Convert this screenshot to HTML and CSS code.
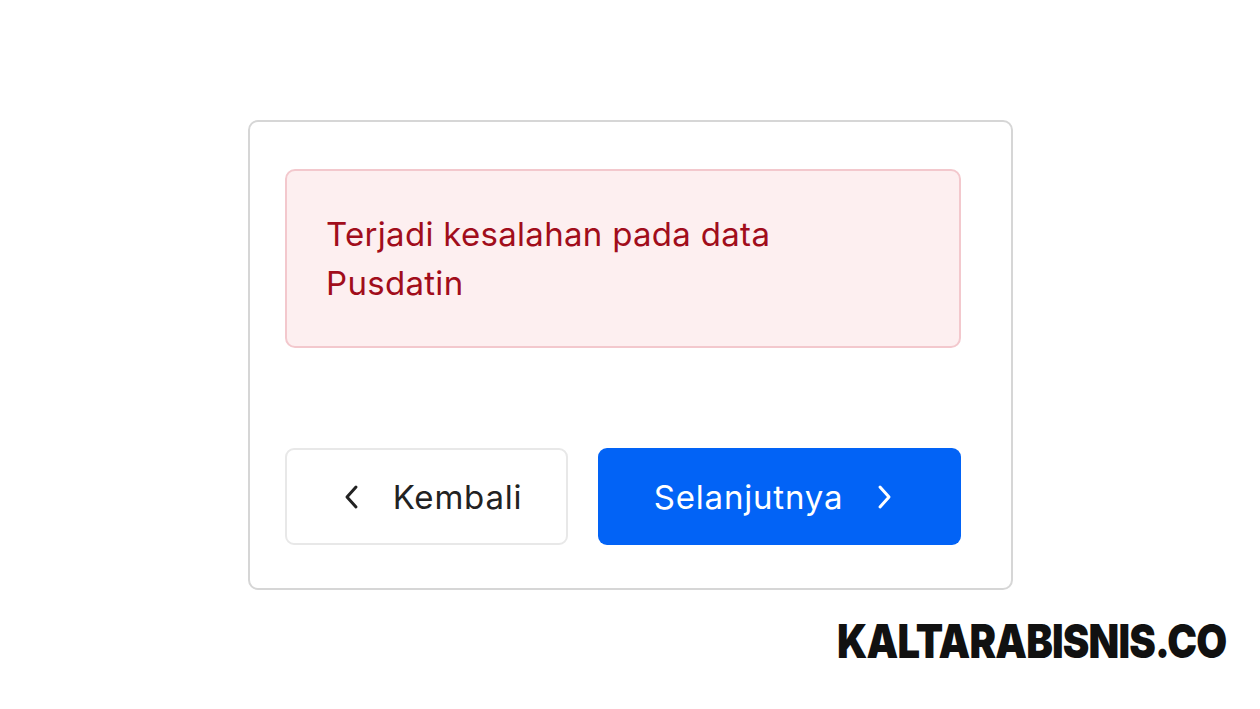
FILE: index.html
```html
<!DOCTYPE html>
<html lang="id">
<head>
  <meta charset="UTF-8" />
  <meta name="viewport" content="width=device-width, initial-scale=1" />
  <title>Verifikasi Data</title>
  <link rel="stylesheet" href="styles.css">
</head>
<body>
  <div class="page">
    <div class="card">
      <div class="alert">Terjadi kesalahan pada data<br>Pusdatin</div>
      <div class="actions">
        <button class="btn btn-back">
          <svg width="18" height="26" viewBox="0 0 18 26"><path d="M13 3 L4 13 L13 23" fill="none" stroke="#222" stroke-width="3" stroke-linecap="round" stroke-linejoin="round"/></svg>
          <span>Kembali</span>
        </button>
        <button class="btn btn-next">
          <span>Selanjutnya</span>
          <svg width="18" height="26" viewBox="0 0 18 26"><path d="M5 3 L14 13 L5 23" fill="none" stroke="#fff" stroke-width="3" stroke-linecap="round" stroke-linejoin="round"/></svg>
        </button>
      </div>
    </div>
    <div class="brand">KALTARABISNIS.CO</div>
  </div>
</body>
</html>
```

FILE: styles.css
```css
body {
  margin: 0;
  background: #fff;
  font-family: "Inter", "Liberation Sans", sans-serif;
}
.page {
  width: 1260px;
  height: 709px;
  position: relative;
  padding-top: 120px;
  padding-left: 248px;
  box-sizing: border-box;
  overflow: hidden;
}
.card {
  width: 765px;
  height: 470px;
  box-sizing: border-box;
  border: 2px solid #d6d6d6;
  border-radius: 10px;
  padding: 47px 50px 0 35px;
}
.alert {
  height: 179px;
  box-sizing: border-box;
  background: #fdeff0;
  border: 2px solid #f3c8cd;
  border-radius: 10px;
  padding: 39px 40px 0 39px;
  color: #a10d1b;
  font-size: 33px;
  line-height: 49px;
  letter-spacing: 0.3px;
}
.actions {
  display: flex;
  gap: 30px;
  margin-top: 100px;
}
.btn {
  height: 97px;
  border-radius: 9px;
  font-family: inherit;
  font-size: 33px;
  letter-spacing: 0.8px;
  display: flex;
  align-items: center;
  justify-content: center;
  gap: 32px;
  cursor: pointer;
}
.btn-back {
  width: 283px;
  padding: 0 0 0 12px;
  background: #fff;
  border: 2px solid #e8e8e8;
  color: #222;
}
.btn-next {
  width: 363px;
  padding: 0 12px 0 0;
  background: #0263f6;
  border: none;
  color: #fff;
}
.brand {
  position: absolute;
  left: 837px;
  top: 612px;
  font-size: 47px;
  font-weight: 900;
  letter-spacing: -1px;
  color: #111;
  transform: scaleX(0.85);
  transform-origin: left center;
}
```
